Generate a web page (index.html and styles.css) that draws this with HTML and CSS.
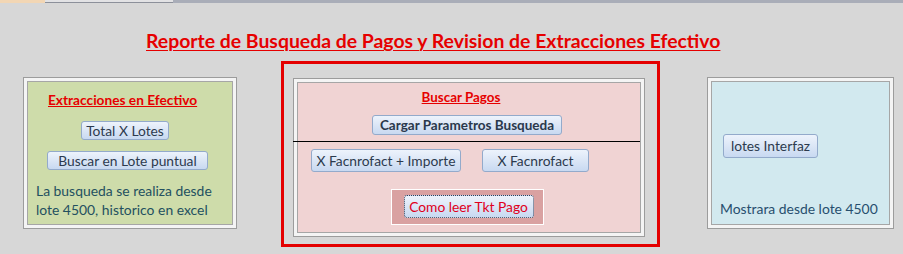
FILE: index.html
```html
<!DOCTYPE html>
<html lang="es">
<head>
<meta charset="utf-8">
<title>Reporte</title>
<link rel="stylesheet" href="styles.css">
</head>
<body>
<div class="topbar">
  <div class="tab-active"></div>
  <div class="tab-light"></div>
  <div class="tab-rest"></div>
</div>
<h1 class="title">Reporte de Busqueda de Pagos y Revision de Extracciones Efectivo</h1>
<div class="row">
  <section class="panel panel-green">
    <h2 class="panel-title">Extracciones en Efectivo</h2>
    <button class="btn btn-total">Total X Lotes</button>
    <button class="btn btn-lote">Buscar en Lote puntual</button>
    <p class="note">La busqueda se realiza desde<br>lote 4500, historico en excel</p>
  </section>
  <div class="redbox">
    <section class="panel panel-pink">
      <h2 class="panel-title center">Buscar Pagos</h2>
      <div class="center-row"><button class="btn btn-bold">Cargar Parametros Busqueda</button></div>
      <div class="rule"></div>
      <div class="btn-pair">
        <button class="btn btn-fi">X Facnrofact + Importe</button>
        <button class="btn btn-f">X Facnrofact</button>
      </div>
      <div class="center-row">
        <div class="tkt-frame"><button class="btn btn-tkt">Como leer Tkt Pago</button></div>
      </div>
    </section>
  </div>
  <section class="panel panel-blue">
    <button class="btn btn-interfaz">lotes Interfaz</button>
    <p class="note note-blue">Mostrara desde lote 4500</p>
  </section>
</div>
</body>
</html>
```
FILE: styles.css
```css
* { box-sizing: border-box; }
html, body { margin: 0; padding: 0; }
body {
  width: 903px;
  height: 254px;
  overflow: hidden;
  background: #d7d7d7;
  font-family: Lato, "Open Sans", sans-serif;
}
.topbar { display: flex; height: 3px; }
.tab-active { width: 45px; background: #f2d6b4; }
.tab-light { width: 128px; background: #e2e2e4; border-bottom: 1px solid #8c909a; }
.tab-rest { flex: 1; background: #a9adb8; }

.title {
  margin: 27px 0 0 146px;
  font-size: 19.4px;
  line-height: 22px;
  font-weight: 700;
  color: #e60000;
  text-decoration: underline;
  text-decoration-thickness: 1px;
  text-underline-offset: 2px;
  white-space: nowrap;
}
.row {
  display: flex;
  align-items: flex-start;
  padding-left: 23px;
  margin-top: 9px;
}
.panel {
  border: 1px solid #9c9c9c;
  box-shadow: inset 0 0 0 3px #f4f4f4, inset 0 0 0 4px #a6a6a6;
  position: relative;
}
.panel-green {
  width: 214px;
  height: 152px;
  margin-top: 16px;
  background: #cedcaa;
  padding: 14px 0 0 24px;
  display: flex;
  flex-direction: column;
  align-items: flex-start;
}
.panel-title {
  margin: 0;
  font-size: 13.7px;
  line-height: 15px;
  font-weight: 700;
  color: #e60000;
  text-decoration: underline;
  text-underline-offset: 1px;
  white-space: nowrap;
}
.panel-title.center { text-align: center; font-size: 13.4px; padding-right: 16px; }
.btn {
  font-family: Lato, "Open Sans", sans-serif;
  font-size: 13.8px;
  line-height: 16px;
  color: #2c3a4e;
  border: 1px solid #93aacb;
  border-radius: 3px;
  background: linear-gradient(#edf3fc, #dbe6f6 50%, #c8d9f1);
  padding: 0 2px;
  white-space: nowrap;
  cursor: pointer;
}
.btn-total { margin: 14px 0 0 33px; height: 19px; width: 88px; }
.btn-lote { margin: 11px 0 0 -1px; height: 19px; width: 161px; }
.note {
  margin: 11px 0 0 -12px;
  font-size: 13.9px;
  line-height: 19px;
  color: #23505f;
  white-space: nowrap;
}
.redbox {
  margin-left: 44px;
  width: 379px;
  height: 186px;
  border: 3px solid #e40000;
  padding: 14px 12px 0 9px;
}
.panel-pink {
  height: 159px;
  background: #f0d3d3;
  padding-top: 11px;
}
.center-row { display: flex; justify-content: center; padding-right: 4px; }
.btn-bold { font-weight: 700; font-size: 13.5px; margin-top: 10px; height: 20px; width: 190px; color: #2a384c; }
.rule {
  height: 1px;
  background: #000;
  margin: 6px 4px 0 -1px;
}
.btn-pair {
  display: flex;
  gap: 21px;
  padding-left: 17px;
  margin-top: 7px;
}
.btn-fi { height: 23px; width: 150px; }
.btn-f { height: 23px; width: 107px; }
.tkt-frame {
  margin-top: 17px;
  width: 153px;
  height: 36px;
  border: 1px solid #ffffff;
  background: #d9a1a1;
  padding: 5px 0 0 12px;
}
.btn-tkt {
  height: 23px;
  width: 130px;
  color: #e00020;
  border: 1px dotted #33415a;
  outline: none;
}
.panel-blue {
  margin-left: 47px;
  width: 187px;
  height: 152px;
  margin-top: 16px;
  background: #d2e9ef;
  padding: 56px 0 0 15px;
  display: flex;
  flex-direction: column;
  align-items: flex-start;
}
.btn-interfaz { height: 24px; width: 95px; }
.note-blue {
  margin: 0;
  margin-top: 41px;
  margin-left: -3px;
  color: #274e6e;
}
```
